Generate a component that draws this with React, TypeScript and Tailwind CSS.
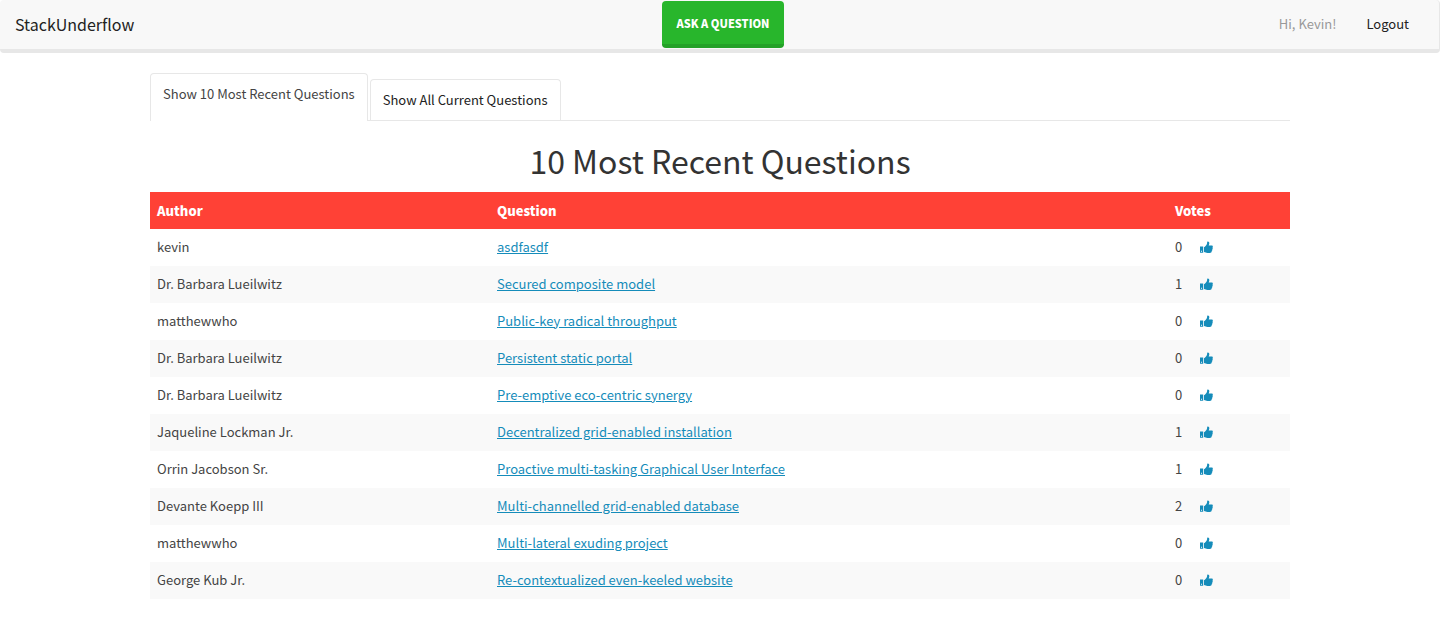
const rows: [string, string, number][] = [
  ["kevin", "asdfasdf", 0],
  ["Dr. Barbara Lueilwitz", "Secured composite model", 1],
  ["matthewwho", "Public-key radical throughput", 0],
  ["Dr. Barbara Lueilwitz", "Persistent static portal", 0],
  ["Dr. Barbara Lueilwitz", "Pre-emptive eco-centric synergy", 0],
  ["Jaqueline Lockman Jr.", "Decentralized grid-enabled installation", 1],
  ["Orrin Jacobson Sr.", "Proactive multi-tasking Graphical User Interface", 1],
  ["Devante Koepp III", "Multi-channelled grid-enabled database", 2],
  ["matthewwho", "Multi-lateral exuding project", 0],
  ["George Kub Jr.", "Re-contextualized even-keeled website", 0],
];

function ThumbsUp() {
  return (
    <svg viewBox="0 0 13 13" className="block h-[13px] w-[13px] fill-current" aria-hidden="true">
      <path fillRule="evenodd" d="M0 5.500h3.200v6.300H0zM1 9.700v1.100h1V9.700z" />
      <path d="M4 6.200C5.200 5.800 6 4.300 6.800 3.200C7.400 2.300 6.800.6 7.700.5C9.200.4 9.500 1.900 9.200 3.100L8.700 4.600H11.600C12.800 4.600 13.200 5.700 12.500 6.500C12.900 7.100 12.800 7.800 12.300 8.300C12.500 9 12.200 9.600 11.700 10C11.800 11.300 11 11.900 9.800 11.900H7.500C6 11.900 5.300 11.200 4 11Z" />
    </svg>
  );
}

export default function App() {
  return (
    <div className="font-['Noto_Sans_CJK_SC',sans-serif] text-[13px] leading-5 text-[#444]">
      <nav className="flex h-[53px] items-start justify-between rounded border-r border-b-4 border-[#e7e7e7] bg-[#f8f8f8] pl-[7px]">
        <div className="flex-1 pt-[14px] text-base leading-5 text-[#222]">
          <a href="#" className="ml-2">StackUnderflow</a>
        </div>
        <button type="button" className="mt-px h-[47px] rounded border-b-4 border-[#23a127] bg-[#28b62c] px-[14px] text-[11px] font-black text-white uppercase">
          Ask a question
        </button>
        <div className="flex flex-1 justify-end gap-[30px] pt-[14px]">
          <span className="text-[#999]">Hi, Kevin!</span>
          <a href="#" className="mr-[30px] text-[#222]">Logout</a>
        </div>
      </nav>
      <main className="mx-auto mt-5 max-w-[1140px]">
        <div className="flex items-end gap-[2px] border-b border-[#e7e7e7]">
          <button type="button" className="-mb-px h-[48px] rounded-t border border-b-0 border-[#e7e7e7] bg-white px-3 pb-2">
            Show 10 Most Recent Questions
          </button>
          <button type="button" className="h-[41px] rounded-t border border-b-0 border-[#e7e7e7] bg-white px-3 text-[#222]">
            Show All Current Questions
          </button>
        </div>
        <h1 className="mt-[19px] mb-3 text-center text-[32px] leading-10 text-[#333]">10 Most Recent Questions</h1>
        <table className="w-full table-fixed text-left">
          <thead className="bg-[#ff4136] text-white">
            <tr className="h-[37px]">
              <th className="w-[340px] px-[7px] font-black">Author</th>
              <th className="px-[7px] font-black">Question</th>
              <th className="w-[122px] px-[7px] font-black">Votes</th>
            </tr>
          </thead>
          <tbody>
            {rows.map(([author, question, votes], i) => (
              <tr key={i} className="h-[37px] even:bg-[#f9f9f9]">
                <td className="px-[7px] pb-[2px]">{author}</td>
                <td className="px-[7px] pb-[2px]">
                  <a href="#" className="text-[#158cba] underline">{question}</a>
                </td>
                <td className="px-[7px] pb-[2px]">
                  <div className="flex items-center gap-[18px]">
                    <span>{votes}</span>
                    <button type="button" aria-label="Vote up" className="pt-[2px] text-[#158cba]"><ThumbsUp /></button>
                  </div>
                </td>
              </tr>
            ))}
          </tbody>
        </table>
      </main>
    </div>
  );
}
